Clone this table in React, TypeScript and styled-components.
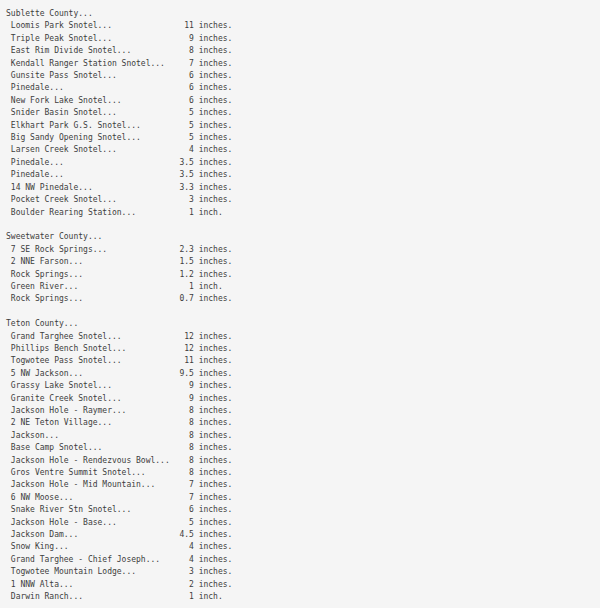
import styled, { createGlobalStyle } from "styled-components";

type Report = {
  amount: string;
  unit: string;
  station: string;
};

type County = {
  name: string;
  reports: Report[];
};

const inches = (station: string, amount: string): Report => ({
  station,
  amount,
  unit: amount === "1" ? "inch." : "inches.",
});

const counties: County[] = [
  {
    name: "Sublette County...",
    reports: [
      inches("Loomis Park Snotel...", "11"),
      inches("Triple Peak Snotel...", "9"),
      inches("East Rim Divide Snotel...", "8"),
      inches("Kendall Ranger Station Snotel...", "7"),
      inches("Gunsite Pass Snotel...", "6"),
      inches("Pinedale...", "6"),
      inches("New Fork Lake Snotel...", "6"),
      inches("Snider Basin Snotel...", "5"),
      inches("Elkhart Park G.S. Snotel...", "5"),
      inches("Big Sandy Opening Snotel...", "5"),
      inches("Larsen Creek Snotel...", "4"),
      inches("Pinedale...", "3.5"),
      inches("Pinedale...", "3.5"),
      inches("14 NW Pinedale...", "3.3"),
      inches("Pocket Creek Snotel...", "3"),
      inches("Boulder Rearing Station...", "1"),
    ],
  },
  {
    name: "Sweetwater County...",
    reports: [
      inches("7 SE Rock Springs...", "2.3"),
      inches("2 NNE Farson...", "1.5"),
      inches("Rock Springs...", "1.2"),
      inches("Green River...", "1"),
      inches("Rock Springs...", "0.7"),
    ],
  },
  {
    name: "Teton County...",
    reports: [
      inches("Grand Targhee Snotel...", "12"),
      inches("Phillips Bench Snotel...", "12"),
      inches("Togwotee Pass Snotel...", "11"),
      inches("5 NW Jackson...", "9.5"),
      inches("Grassy Lake Snotel...", "9"),
      inches("Granite Creek Snotel...", "9"),
      inches("Jackson Hole - Raymer...", "8"),
      inches("2 NE Teton Village...", "8"),
      inches("Jackson...", "8"),
      inches("Base Camp Snotel...", "8"),
      inches("Jackson Hole - Rendezvous Bowl...", "8"),
      inches("Gros Ventre Summit Snotel...", "8"),
      inches("Jackson Hole - Mid Mountain...", "7"),
      inches("6 NW Moose...", "7"),
      inches("Snake River Stn Snotel...", "6"),
      inches("Jackson Hole - Base...", "5"),
      inches("Jackson Dam...", "4.5"),
      inches("Snow King...", "4"),
      inches("Grand Targhee - Chief Joseph...", "4"),
      inches("Togwotee Mountain Lodge...", "3"),
      inches("1 NNW Alta...", "2"),
      inches("Darwin Ranch...", "1"),
    ],
  },
];

export default function App() {
  return (
    <>
      <GlobalStyle />
      <Page>
        {counties.map((county) => (
          <Section key={county.name}>
            <CountyName>{county.name}</CountyName>
            {county.reports.map((report, index) => (
              <Row key={index}>
                <Station>{report.station}</Station>
                <Amount>{report.amount}</Amount>
                <Unit>{report.unit}</Unit>
              </Row>
            ))}
          </Section>
        ))}
      </Page>
    </>
  );
}

const GlobalStyle = createGlobalStyle`
  html, body {
    margin: 0;
    padding: 0;
    background: #f5f5f5;
  }
`;

const Page = styled.div`
  min-height: 100vh;
  box-sizing: border-box;
  padding: 8px 0 0 6px;
  display: flex;
  flex-direction: column;
  gap: 12.4px;
  font-family: "DejaVu Sans Mono", "Liberation Mono", monospace;
  font-size: 8px;
  line-height: 12.4px;
  color: #3d3d3d;
  background: #f5f5f5;
`;

const Section = styled.section`
  display: flex;
  flex-direction: column;
`;

const CountyName = styled.div`
  white-space: pre;
`;

const Row = styled.div`
  display: grid;
  grid-template-columns: 33ch 4ch auto;
  column-gap: 1ch;
  padding-left: 1ch;
  white-space: pre;
`;

const Station = styled.span``;

const Amount = styled.span`
  text-align: right;
`;

const Unit = styled.span``;
